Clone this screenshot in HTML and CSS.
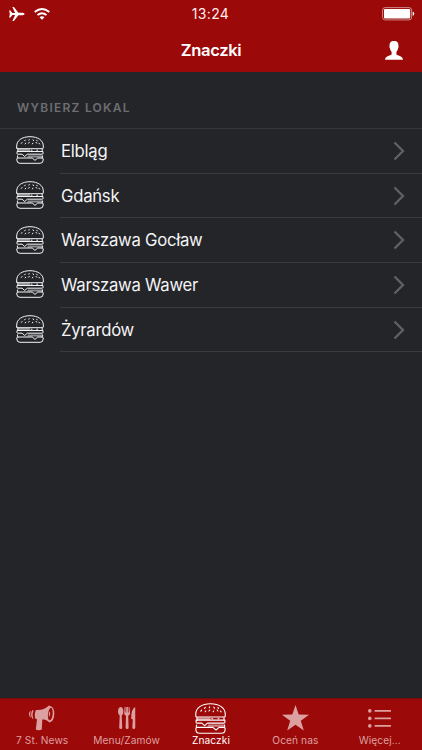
FILE: index.html
```html
<!DOCTYPE html>
<html lang="pl">
<head>
<meta charset="utf-8">
<title>Znaczki</title>
<link rel="stylesheet" href="styles.css">
</head>
<body>
<svg class="defs" aria-hidden="true">
  <symbol id="burger" viewBox="0 0 28 28">
    <g fill="none" stroke="currentColor" stroke-linejoin="round" stroke-linecap="round">
      <path d="M.7 12V10C.7 4.500 6 .7 14 .7S27.300 4.500 27.300 10V12Q27.300 12.700 26.300 12.700H1.700Q.7 12.700.7 12Z"/>
      <path d="M6 6.500L5.300 7.400M9.300 4L8.600 4.900M13.300 6.300L12.600 7.200M17 3.800L17.600 4.700M20 6.300L20.700 7.200M9.700 7.200L9.200 7.900M16.800 7.200L16.400 7.900M23 7.200L23.600 8M13.200 3.500L12.900 4.200M20.700 4.200L21.200 4.900"/>
      <path d="M1.800 12.900V15.300M26.200 12.900V15.300M15.200 14.200H16M20.800 14.200H21.600"/>
      <path d="M6 15.500H27V17.700Q27 18.200 26 18.200H11.300L8.700 20.500L6.100 18.200H2Q1 18.200 1 17.700V15.500H6"/>
      <path d="M1.500 19.800Q.7 21.600 2 22H16.200L19 24.400L21.700 22H26Q27.300 21.600 26.500 19.800"/>
      <path d="M2 22Q.8 22 .8 23V24Q.8 27.300 4 27.300H24Q27.200 27.300 27.200 24V23Q27.200 22 26 22"/>
    </g>
    <path class="filling" d="M2 13.100H14V15.300H2ZM12 19.400H26V21.500H11Z"/>
  </symbol>
  <symbol id="chevron" viewBox="0 0 12 20"><path d="M1.500 1.500L10 10L1.500 18.500" fill="none" stroke="currentColor" stroke-width="2.300"/></symbol>
</svg>
<div class="app">
  <header>
    <div class="status">
      <div class="signals">
        <svg class="plane" viewBox="0 0 17 15"><path d="M0 3.700H1.500L3.500 6.500H6.500L3.500 0H5.200L10 6.200H14.800Q16.600 6.500 16.600 7.500T14.800 8.800H10L5.200 15H3.500L6.500 8.500H3.500L1.500 11.300H0L.9 7.500Z" fill="currentColor"/></svg>
        <svg class="wifi" viewBox="0 0 16 12"><g fill="none" stroke="currentColor" stroke-width="1.900"><path d="M.7 4.100Q8-2 15.300 4.100M3.500 7.100Q8 3.400 12.500 7.100"/></g><path d="M5.500 9.300Q8 7.300 10.500 9.300L8 11.800Z" fill="currentColor"/></svg>
      </div>
      <time>13:24</time>
      <svg class="battery" viewBox="0 0 33 14"><rect x=".6" y=".6" width="29" height="12.300" rx="2.500" fill="none" stroke="currentColor" stroke-width=".7" opacity=".75"/><rect x="2" y="2" width="26.200" height="9.500" rx="1" fill="currentColor"/><path d="M30.700 4.500Q32.300 5.200 32.300 6.700T30.700 9Z" fill="currentColor"/></svg>
    </div>
    <div class="navbar">
      <h1>Znaczki</h1>
      <svg class="person" viewBox="0 0 18 19"><path d="M9 0C5.500 0 4.500 2 4.600 4.500Q4 5.600 4.900 7.200Q5.300 9.400 6.600 11V13.600C5 15 .2 15 0 18.800H18C17.800 15 13 15 11.400 13.600V11Q12.700 9.400 13.100 7.200Q14 5.600 13.400 4.500C13.500 2 12.500 0 9 0Z" fill="currentColor"/></svg>
    </div>
  </header>
  <main>
    <h2>WYBIERZ LOKAL</h2>
    <ul class="list">
      <li><svg class="burger"><use href="#burger"/></svg><div class="cell"><span>Elbląg</span><svg class="chevron"><use href="#chevron"/></svg></div></li>
      <li><svg class="burger"><use href="#burger"/></svg><div class="cell"><span>Gdańsk</span><svg class="chevron"><use href="#chevron"/></svg></div></li>
      <li><svg class="burger"><use href="#burger"/></svg><div class="cell"><span>Warszawa Gocław</span><svg class="chevron"><use href="#chevron"/></svg></div></li>
      <li><svg class="burger"><use href="#burger"/></svg><div class="cell"><span>Warszawa Wawer</span><svg class="chevron"><use href="#chevron"/></svg></div></li>
      <li><svg class="burger"><use href="#burger"/></svg><div class="cell"><span>Żyrardów</span><svg class="chevron"><use href="#chevron"/></svg></div></li>
    </ul>
  </main>
  <nav>
    <a class="tab"><span class="icon"><svg width="26" height="26" viewBox="0 0 26 26"><g fill="currentColor"><path d="M7 5C13 5.500 17 3.500 20 .6Q25.500 1.600 25.300 9T20.500 17.500C18 15 15.500 14.600 13.300 14.600L12.800 24.500Q10 26 6.800 24.600L8 14.300L6.500 13.800Q4.700 9.500 7 5Z"/><path d="M4.700 5.300Q2.500 9.400 4.500 13.700L3.200 13.400Q.9 9.400 3.300 5.300ZM2.200 6Q.3 9.400 2 12.700Q-.8 11 .2 7.700Q.8 6.300 2.200 6Z"/></g><ellipse cx="21.300" cy="9.100" rx="2.300" ry="6.300" transform="rotate(7 21.300 9.100)" fill="#9b0909"/><path d="M20 6.300Q22.600 9 19.800 12Z" fill="currentColor"/></svg></span><span class="label">7 St. News</span></a>
    <a class="tab"><span class="icon"><svg width="18" height="24" viewBox="0 0 18 24"><g fill="currentColor"><path d="M2.700 1C.7 1 0 4 0 6Q0 8.500 1.700 9.500L1.200 21.500Q1.300 23 2.700 23T4.200 21.500L3.700 9.500Q5.400 8.500 5.400 6C5.400 4 4.700 1 2.700 1Z"/><path d="M6.600 1H7.500V6.500H8.200V1H9.900V6.500H10.600V1H11.500L12 7.500Q12 9 10.200 9.800L10.600 21.500Q10.500 23 9.100 23T7.600 21.500L8 9.800Q6.200 9 6.200 7.500Z"/><path d="M17.200 1Q13 3 13.200 12.700L14.800 13.500L14.300 21.500Q14.500 23 15.800 23T17.300 21.500Z"/></g></svg></span><span class="label">Menu/Zamów</span></a>
    <a class="tab active"><span class="icon"><svg width="31" height="31"><use href="#burger"/></svg></span><span class="label">Znaczki</span></a>
    <a class="tab"><span class="icon"><svg width="27" height="26" viewBox="0 0 27 26"><path d="M13.500 0L16.700 9.500L27 9.700L18.800 15.800L21.800 25.600L13.500 19.700L5.200 25.600L8.200 15.800L0 9.700L10.300 9.500Z" fill="currentColor"/></svg></span><span class="label">Oceń nas</span></a>
    <a class="tab"><span class="icon"><svg width="23" height="19" viewBox="0 0 23 19"><g fill="currentColor"><circle cx="1.800" cy="1.900" r="1.800"/><circle cx="1.800" cy="9.400" r="1.800"/><circle cx="1.800" cy="16.900" r="1.800"/></g><path d="M7.300 1.900H22.300M7.300 9.400H22.300M7.300 16.900H22.300" stroke="currentColor" stroke-width="1.700" stroke-linecap="round"/></svg></span><span class="label">Więcej...</span></a>
  </nav>
</div>
</body>
</html>
```
FILE: styles.css
```css
* { box-sizing: border-box; }
body { margin: 0; background: #242529; color: #f4f4f5; font-family: Inter, "Liberation Sans", sans-serif; }
svg { display: block; flex: none; }
.defs { display: none; }
.app { height: 750px; display: flex; flex-direction: column; overflow: hidden; }
header { height: 72px; background: #9b0909; color: #fff; }
.status { height: 28px; display: grid; grid-template-columns: 1fr auto 1fr; align-items: center; padding: 0 8px 0 9px; }
.signals { display: flex; align-items: center; gap: 9px; }
.plane { width: 16px; height: 14px; }
.wifi { width: 16px; height: 12px; }
time { font-size: 14px; line-height: 28px; letter-spacing: .35px; color: #ffecec; margin-right: 2px; }
.battery { width: 33px; height: 14px; justify-self: end; margin-right: -1px; }
.navbar { height: 44px; display: grid; grid-template-columns: 1fr auto 1fr; align-items: center; padding: 0 18px; }
h1 { margin: 0; grid-column: 2; font-size: 16.6px; line-height: 44px; font-weight: 600; letter-spacing: -.35px; }
.person { width: 18px; height: 19px; justify-self: end; margin-right: 1px; }
main { flex: 1; }
h2 { margin: 0; height: 57px; padding: 27px 17px 0; border-bottom: 1px solid #36373b; color: #6e6e72; font-size: 12px; line-height: 18px; font-weight: 600; letter-spacing: 1.24px; }
.list { list-style: none; margin: 0; padding: 0; }
li { height: 44.7px; display: flex; align-items: center; padding-left: 16px; }
.burger { width: 28px; height: 28px; margin: 0 0 2px .4px; stroke-width: 1px; }
.filling { fill: currentColor; opacity: .5; stroke: none; }
.cell { height: 100%; flex: 1; margin-left: 15.6px; padding: 0 17px 0 1px; border-bottom: 1px solid #3a3b3f; display: flex; align-items: center; justify-content: space-between; font-size: 16.7px; letter-spacing: -.26px; }
.cell span { line-height: 20px; }
.chevron { width: 12px; height: 20px; color: #606166; }
nav { height: 52px; background: #9b0909; border-top: 1px solid #760b0d; display: grid; grid-template-columns: repeat(5, 84.4px); }
.tab { color: #dda0a0; display: flex; flex-direction: column; align-items: center; }
.icon { height: 36px; padding-top: 2px; display: flex; align-items: center; }
.label { font-size: 10.2px; line-height: 12px; letter-spacing: .08px; white-space: nowrap; margin-top: -1px; }
.active { color: #fff; stroke-width: 1px; }
```
